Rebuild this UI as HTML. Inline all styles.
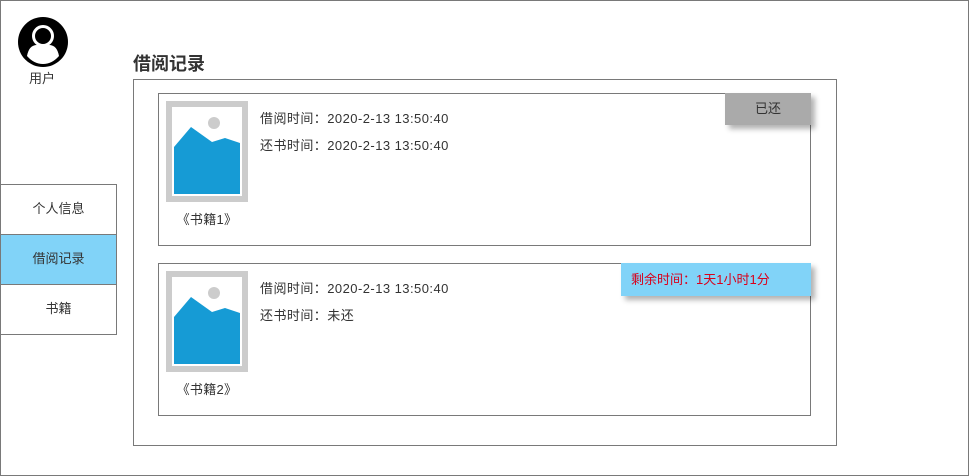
<html><head><style>
body{margin:0;width:969px;height:476px;position:relative;font-family:"Liberation Sans","Noto Sans CJK SC",sans-serif;font-size:13px;color:#333;background:#fff;overflow:hidden}
.a{position:absolute;box-sizing:border-box}
.card{border:1px solid #797979;width:653px;height:153px;left:158px}
.img{left:7px;top:7px;width:82px;height:101px;background:#ccc}
.t{left:101px;font-size:13px;letter-spacing:0.45px}
.cap{left:7px;width:82px;text-align:center;top:115px;letter-spacing:0.3px}
.menu{left:0;width:117px;height:51px;border:1px solid #797979;text-align:center;line-height:48px}
</style></head><body>
<div class="a" style="left:0;top:0;width:969px;height:476px;border:1px solid #797979"></div>
<svg class="a" style="left:17px;top:16px" width="52" height="52" viewBox="0 0 52 52"><circle cx="26" cy="26" r="25" fill="#000"/><circle cx="26" cy="20" r="9.5" fill="none" stroke="#fff" stroke-width="3"/><path d="M10 40 Q12 29 20 29 L32 29 Q40 29 42 40 Q35 48 26 48 Q17 48 10 40Z" fill="#fff"/></svg>
<div class="a" style="left:29px;top:68px;font-size:13px">用户</div>
<div class="a" style="left:133px;top:50px;font-size:18px;font-weight:bold">借阅记录</div>
<div class="a menu" style="top:184px">个人信息</div>
<div class="a menu" style="top:234px;background:#81d3f8">借阅记录</div>
<div class="a menu" style="top:284px">书籍</div>
<div class="a" style="left:133px;top:79px;width:704px;height:367px;border:1px solid #797979"></div>
<div class="a card" style="top:93px">
<div class="a img"><svg width="82" height="101"><rect x="6" y="6" width="70" height="89" fill="#fff"/><circle cx="48" cy="22" r="6" fill="#ccc"/><path d="M8 46 L25 26 L46 41 L59 37 L74 42 L74 93 L8 93Z" fill="#169bd5"/></svg></div>
<div class="a cap">《书籍1》</div>
<div class="a t" style="top:14px">借阅时间：2020-2-13 13:50:40</div>
<div class="a t" style="top:41px">还书时间：2020-2-13 13:50:40</div>
<div class="a" style="left:566px;top:-1px;width:86px;height:32px;background:#aaa;text-align:center;line-height:32px;box-shadow:4px 4px 5px rgba(0,0,0,.3)">已还</div>
</div>
<div class="a card" style="top:263px">
<div class="a img"><svg width="82" height="101"><rect x="6" y="6" width="70" height="89" fill="#fff"/><circle cx="48" cy="22" r="6" fill="#ccc"/><path d="M8 46 L25 26 L46 41 L59 37 L74 42 L74 93 L8 93Z" fill="#169bd5"/></svg></div>
<div class="a cap">《书籍2》</div>
<div class="a t" style="top:14px">借阅时间：2020-2-13 13:50:40</div>
<div class="a t" style="top:41px">还书时间：未还</div>
<div class="a" style="left:462px;top:-1px;width:190px;height:33px;background:#81d3f8;color:#d9001b;padding-left:10px;line-height:33px;box-shadow:4px 4px 5px rgba(0,0,0,.3)">剩余时间：1天1小时1分</div>
</div>
</body></html>
